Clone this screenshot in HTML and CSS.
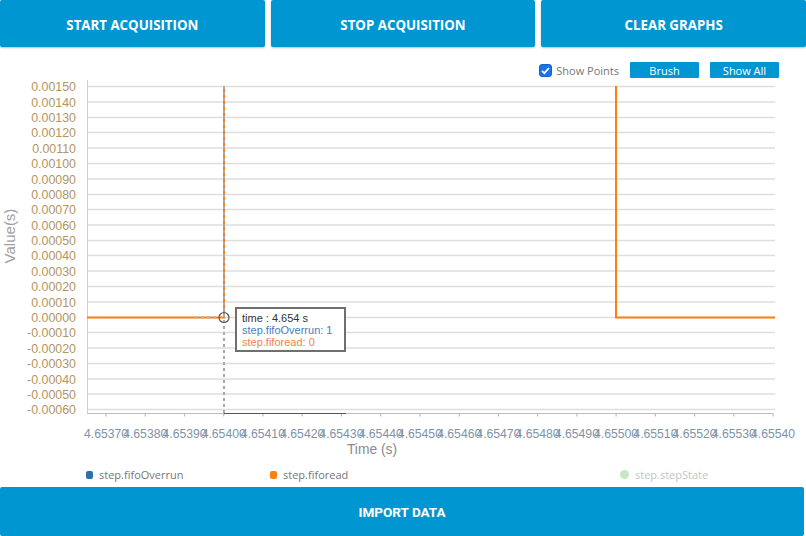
FILE: index.html
```html
<!DOCTYPE html>
<html>
<head>
<meta charset="utf-8">
<link rel="stylesheet" href="styles.css">
</head>
<body>
<div class="top">
  <button class="btn">START ACQUISITION</button>
  <button class="btn">STOP ACQUISITION</button>
  <button class="btn">CLEAR GRAPHS</button>
</div>
<div class="chart">
  <div class="controls">
    <label class="chk"><span class="box"><svg width="13" height="13" viewBox="0 0 13 13"><rect x="0.5" y="0.5" width="12" height="12" rx="2.5" fill="#1a73e8" stroke="#1565c0"/><path d="M3 6.8 L5.4 9.2 L10 4" fill="none" stroke="#fff" stroke-width="1.8"/></svg></span>Show Points</label>
    <button class="small">Brush</button>
    <button class="small">Show All</button>
  </div>
  <svg class="plot" width="806" height="384" viewBox="0 78 806 384">
    <g class="grid">
      <line x1="87" x2="775" y1="86.5" y2="86.5"/>
      <line x1="87" x2="775" y1="102" y2="102"/>
      <line x1="87" x2="775" y1="117.5" y2="117.5"/>
      <line x1="87" x2="775" y1="132.5" y2="132.5"/>
      <line x1="87" x2="775" y1="148" y2="148"/>
      <line x1="87" x2="775" y1="163.5" y2="163.5"/>
      <line x1="87" x2="775" y1="179" y2="179"/>
      <line x1="87" x2="775" y1="194.5" y2="194.5"/>
      <line x1="87" x2="775" y1="209.5" y2="209.5"/>
      <line x1="87" x2="775" y1="225" y2="225"/>
      <line x1="87" x2="775" y1="240.5" y2="240.5"/>
      <line x1="87" x2="775" y1="255.5" y2="255.5"/>
      <line x1="87" x2="775" y1="271" y2="271"/>
      <line x1="87" x2="775" y1="286.5" y2="286.5"/>
      <line x1="87" x2="775" y1="302" y2="302"/>
      <line x1="87" x2="775" y1="317.5" y2="317.5"/>
      <line x1="87" x2="775" y1="332.5" y2="332.5"/>
      <line x1="87" x2="775" y1="348" y2="348"/>
      <line x1="87" x2="775" y1="363.5" y2="363.5"/>
      <line x1="87" x2="775" y1="379" y2="379"/>
      <line x1="87" x2="775" y1="394" y2="394"/>
      <line x1="87" x2="775" y1="409.5" y2="409.5"/>
    </g>
    <line class="yaxis" x1="87.5" x2="87.5" y1="80" y2="413.5"/>
    <g class="ylabels">
      <text x="76" y="91">0.00150</text>
      <text x="76" y="106.5">0.00140</text>
      <text x="76" y="122">0.00130</text>
      <text x="76" y="137">0.00120</text>
      <text x="76" y="152.5">0.00110</text>
      <text x="76" y="168">0.00100</text>
      <text x="76" y="183.5">0.00090</text>
      <text x="76" y="199">0.00080</text>
      <text x="76" y="214">0.00070</text>
      <text x="76" y="229.5">0.00060</text>
      <text x="76" y="245">0.00050</text>
      <text x="76" y="260">0.00040</text>
      <text x="76" y="275.5">0.00030</text>
      <text x="76" y="291">0.00020</text>
      <text x="76" y="306.5">0.00010</text>
      <text x="76" y="322">0.00000</text>
      <text x="76" y="337">-0.00010</text>
      <text x="76" y="352.5">-0.00020</text>
      <text x="76" y="368">-0.00030</text>
      <text x="76" y="383.5">-0.00040</text>
      <text x="76" y="398.5">-0.00050</text>
      <text x="76" y="414">-0.00060</text>
    </g>
    <text class="ytitle" transform="translate(14.5 236) rotate(-90)">Value(s)</text>
    <path class="xaxis" d="M87 413.5 H773 M106 413.5 v3 M145.2 413.5 v3 M184.5 413.5 v3 M223.7 413.5 v3 M262.9 413.5 v3 M302.2 413.5 v3 M341.4 413.5 v3 M380.7 413.5 v3 M419.9 413.5 v3 M459.2 413.5 v3 M498.4 413.5 v3 M537.6 413.5 v3 M576.9 413.5 v3 M616.1 413.5 v3 M655.4 413.5 v3 M694.6 413.5 v3 M733.8 413.5 v3 M773.1 413.5 v3"/>
    <path class="xaxis-dark" d="M224 413.5 H346"/>
    <g class="xlabels">
      <text x="106" y="437.5">4.65370</text>
      <text x="145.2" y="437.5">4.65380</text>
      <text x="184.5" y="437.5">4.65390</text>
      <text x="223.7" y="437.5">4.65400</text>
      <text x="262.9" y="437.5">4.65410</text>
      <text x="302.2" y="437.5">4.65420</text>
      <text x="341.4" y="437.5">4.65430</text>
      <text x="380.7" y="437.5">4.65440</text>
      <text x="419.9" y="437.5">4.65450</text>
      <text x="459.2" y="437.5">4.65460</text>
      <text x="498.4" y="437.5">4.65470</text>
      <text x="537.6" y="437.5">4.65480</text>
      <text x="576.9" y="437.5">4.65490</text>
      <text x="616.1" y="437.5">4.65500</text>
      <text x="655.4" y="437.5">4.65510</text>
      <text x="694.6" y="437.5">4.65520</text>
      <text x="733.8" y="437.5">4.65530</text>
      <text x="773.1" y="437.5">4.65540</text>
    </g>
    <text class="xtitle" x="372" y="453.5">Time (s)</text>
    <path class="series" d="M87 317.5 H224 V86"/>
    <path class="series" d="M616 86 V317.5 H775"/>
    <line class="hover" x1="224" x2="224" y1="86" y2="413"/>
    <line class="hover-h" x1="195" x2="219" y1="317.5" y2="317.5"/>
    <circle class="focus" cx="224" cy="317.5" r="5"/>
  </svg>
  <div class="tip">
    <div class="t1">time : 4.654 s</div>
    <div class="t2">step.fifoOverrun: 1</div>
    <div class="t3">step.fiforead: 0</div>
  </div>
</div>
<div class="legend">
  <div class="item i1"><span class="sw blue"></span>step.fifoOverrun</div>
  <div class="item i2"><span class="sw orange"></span>step.fiforead</div>
  <div class="item i3"><span class="sw green"></span>step.stepState</div>
</div>
<button class="import">IMPORT DATA</button>
</body>
</html>
```
FILE: styles.css
```css
html, body {
  margin: 0;
  padding: 0;
  background: #fff;
  width: 806px;
  height: 536px;
  overflow: hidden;
  font-family: "Open Sans", "DejaVu Sans", sans-serif;
}
button {
  font-family: inherit;
  border: none;
  cursor: pointer;
}
.top {
  display: flex;
  gap: 6px;
  height: 48px;
}
.btn {
  flex: 1;
  height: 47px;
  padding: 3px 0 0;
  background: #0096d1;
  color: #fff;
  font-weight: 700;
  font-size: 13.3px;
  border-radius: 2px;
  box-shadow: 0 1px 2px rgba(0,0,0,0.25);
}
.chart {
  position: relative;
  height: 414px;
}
.controls {
  display: flex;
  justify-content: flex-end;
  align-items: center;
  gap: 11px;
  padding-top: 14px;
  padding-right: 27px;
  height: 16px;
}
.chk {
  display: flex;
  align-items: center;
  gap: 4px;
  font-size: 11px;
  color: #777;
}
.box {
  display: block;
  width: 13px;
  height: 13px;
}
.box svg { display: block; }
.small {
  height: 16px;
  width: 69px;
  background: #0096d1;
  color: #fff;
  font-size: 11px;
  padding: 0;
  border-radius: 1px;
}
.plot {
  display: block;
}
.grid line {
  stroke: #dedede;
  stroke-width: 1.4;
}
.yaxis {
  stroke: #d0d0d0;
  stroke-width: 1;
}
.xaxis {
  fill: none;
  stroke: #bdbdbd;
  stroke-width: 1.2;
}
.xaxis-dark {
  stroke: #555;
  stroke-width: 1;
}
.ylabels text {
  text-anchor: end;
  font-family: "Liberation Sans", Arial, sans-serif;
  font-size: 12.4px;
  fill: #b3955f;
}
.xlabels text {
  text-anchor: middle;
  font-family: "Liberation Sans", Arial, sans-serif;
  font-size: 12.2px;
  fill: #7f92a6;
}
.ytitle {
  text-anchor: middle;
  font-family: "Liberation Sans", Arial, sans-serif;
  font-size: 15px;
  fill: #a0a0a0;
}
.xtitle {
  text-anchor: middle;
  font-family: "Liberation Sans", Arial, sans-serif;
  font-size: 13.8px;
  fill: #8a8a8a;
}
.series {
  fill: none;
  stroke: #ff7f0e;
  stroke-width: 2;
}
.hover {
  stroke: #a9a9a9;
  stroke-width: 2;
  stroke-dasharray: 3 3;
}
.hover-h {
  stroke: #b0b0b0;
  stroke-width: 2;
  stroke-dasharray: 3 3;
}
.focus {
  fill: none;
  stroke: #555;
  stroke-width: 1.2;
}
.tip {
  position: absolute;
  left: 235px;
  top: 259px;
  width: 97px;
  padding: 3px 5px 2px 5px;
  background: #fff;
  border: 2px solid #6f6f6f;
  font-family: "Liberation Sans", Arial, sans-serif;
  font-size: 11px;
  line-height: 12px;
  white-space: nowrap;
}
.tip .t1 { color: #333; }
.tip .t2 { color: #4a7db8; }
.tip .t3 { color: #f47f4a; }
.legend {
  display: flex;
  align-items: center;
  height: 25px;
  padding-left: 86px;
  font-size: 11px;
}
.item {
  display: flex;
  align-items: center;
  gap: 6px;
  color: #777;
}
.i1 { width: 184px; }
.i2 { width: 350px; }
.i3 { color: #c4c4c4; }
.sw {
  display: block;
  width: 7px;
  height: 8px;
  border-radius: 2px;
}
.sw.blue { background: #2e6fae; }
.sw.orange { background: #ff7f0e; }
.sw.green { background: #c7e6c2; border-radius: 50%; width: 9px; height: 9px; }
.import {
  display: block;
  width: 804px;
  height: 49px;
  background: #0096d1;
  color: #fff;
  font-family: Roboto, "Open Sans", sans-serif;
  font-weight: 700;
  font-size: 13.5px;
  border-radius: 2px;
}
```
